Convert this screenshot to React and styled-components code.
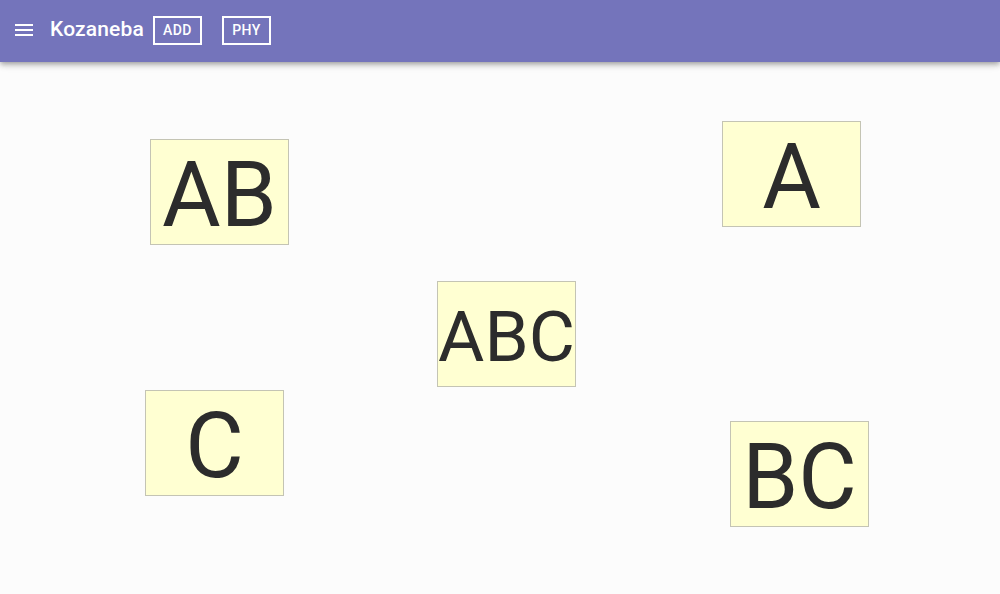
import React from "react";
import styled, { createGlobalStyle } from "styled-components";

const Global = createGlobalStyle`
  html, body { margin: 0; padding: 0; height: 100%; }
  body { background: #fcfcfc; font-family: Roboto, "Liberation Sans", sans-serif; overflow: hidden; }
  #root { height: 100%; }
`;

const Page = styled.div`
  display: flex;
  flex-direction: column;
  width: 1000px;
  height: 594px;
`;

const AppBar = styled.header`
  position: relative;
  z-index: 2;
  flex: 0 0 62px;
  display: flex;
  align-items: center;
  padding: 0 12px 2px 12px;
  box-sizing: border-box;
  background: #7474bb;
  color: #fff;
  box-shadow: 0 2px 4px -1px rgba(0,0,0,0.2), 0 4px 5px 0 rgba(0,0,0,0.14), 0 1px 10px 0 rgba(0,0,0,0.12);
`;

const MenuButton = styled.button`
  display: flex;
  align-items: center;
  justify-content: center;
  width: 24px;
  height: 24px;
  padding: 0;
  margin-right: 14px;
  border: none;
  background: none;
  color: #fff;
`;

const Title = styled.h1`
  margin: 0 9px 0 0;
  font-size: 21px;
  font-weight: 500;
  letter-spacing: 0.15px;
  line-height: 1.2;
`;

const ToolButton = styled.button`
  display: flex;
  align-items: center;
  justify-content: center;
  box-sizing: border-box;
  height: 29px;
  width: 49px;
  margin-right: ${(p) => p.$gap || 0}px;
  border: 2px solid #fff;
  background: transparent;
  color: #fff;
  font-family: Roboto, "Liberation Sans", sans-serif;
  font-size: 14px;
  font-weight: 500;
  letter-spacing: 0.4px;
  padding: 0;
`;

const Canvas = styled.main`
  position: relative;
  flex: 1;
  overflow: hidden;
`;

const Kozane = styled.div`
  position: absolute;
  left: ${(p) => p.$x}px;
  top: ${(p) => p.$y}px;
  width: 139px;
  height: 106px;
  box-sizing: border-box;
  border: 1px solid #c4c4b4;
  background: #ffffd2;
  display: flex;
  align-items: center;
  justify-content: center;
  padding-top: ${(p) => p.$shift}px;
  color: #2c2c2c;
  font-family: Roboto, "Liberation Sans", sans-serif;
  font-size: ${(p) => p.$size}px;
  line-height: normal;
  white-space: nowrap;
`;

const cards = [
  { text: "AB", x: 150, y: 139, size: 90, shift: 7 },
  { text: "A", x: 722, y: 121, size: 90, shift: 7 },
  { text: "ABC", x: 437, y: 281, size: 71, shift: 5 },
  { text: "C", x: 145, y: 390, size: 90, shift: 7 },
  { text: "BC", x: 730, y: 421, size: 90, shift: 7 },
];

export default function App() {
  return (
    <>
      <Global />
      <Page>
        <AppBar>
          <MenuButton aria-label="menu">
            <svg width="24" height="24" viewBox="0 0 24 24" fill="currentColor">
              <path d="M3 18h18v-2H3v2zm0-5h18v-2H3v2zm0-7v2h18V6H3z" />
            </svg>
          </MenuButton>
          <Title>Kozaneba</Title>
          <ToolButton $gap={20}>ADD</ToolButton>
          <ToolButton>PHY</ToolButton>
        </AppBar>
        <Canvas>
          {cards.map((c) => (
            <Kozane key={c.text} $x={c.x} $y={c.y - 62} $size={c.size} $shift={c.shift}>
              {c.text}
            </Kozane>
          ))}
        </Canvas>
      </Page>
    </>
  );
}
